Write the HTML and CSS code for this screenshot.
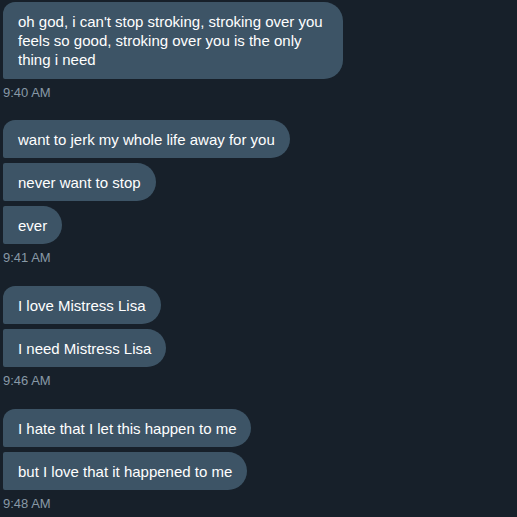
FILE: index.html
```html
<!DOCTYPE html>
<html>
<head>
    <meta charset="utf-8">
    <title>Messages</title>
    <link rel="stylesheet" href="styles.css">
</head>
<body>
    <div class="thread">
        <div class="group">
            <div class="bubble multi">oh god, i can't stop stroking, stroking over you<br>feels so good, stroking over you is the only<br>thing i need</div>
            <div class="time">9:40 AM</div>
        </div>

        <div class="group">
            <div class="bubble">want to jerk my whole life away for you</div>
            <div class="bubble">never want to stop</div>
            <div class="bubble">ever</div>
            <div class="time">9:41 AM</div>
        </div>

        <div class="group">
            <div class="bubble">I love Mistress Lisa</div>
            <div class="bubble">I need Mistress Lisa</div>
            <div class="time">9:46 AM</div>
        </div>

        <div class="group">
            <div class="bubble">I hate that I let this happen to me</div>
            <div class="bubble">but I love that it happened to me</div>
            <div class="time">9:48 AM</div>
        </div>
    </div>
</body>
</html>
```

FILE: styles.css
```css
* {
    margin: 0;
    padding: 0;
    box-sizing: border-box;
}

body {
    background-color: #17202a;
    font-family: "Segoe UI", "Liberation Sans", Arial, sans-serif;
    color: #ffffff;
    padding: 2px 0 0 3px;
    height: 517px;
    overflow: hidden;
}

.thread {
    display: flex;
    flex-direction: column;
    gap: 19px;
}

.group {
    display: flex;
    flex-direction: column;
    align-items: flex-start;
    gap: 5px;
}

.group:first-child {
    margin-bottom: -1px;
}

.bubble {
    background-color: #3d5466;
    font-size: 15px;
    line-height: 19px;
    padding: 10px 15px 9px 15px;
    border-radius: 2px 19px 19px 2px;
}

.bubble.multi {
    padding-right: 20px;
    padding-bottom: 10px;
}

.group .bubble:first-child {
    border-top-left-radius: 12px;
}

.group .bubble:only-of-type {
    border-radius: 12px 19px 15px 2px;
}

.time {
    font-size: 13px;
    line-height: 18px;
    color: #8899a6;
}
```
